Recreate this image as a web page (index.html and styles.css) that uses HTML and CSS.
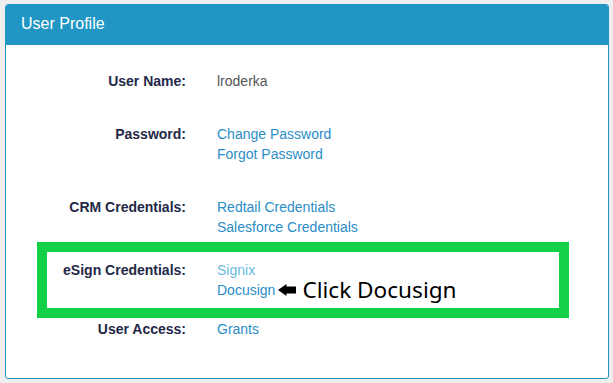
FILE: index.html
```html
<!DOCTYPE html>
<html>
<head>
<meta charset="utf-8">
<link rel="stylesheet" href="styles.css">
</head>
<body>
<div class="panel">
  <div class="panel-header">User Profile</div>
  <div class="panel-body">
    <div class="row row-name">
      <div class="label">User Name:</div>
      <div class="value"><span class="plain">lroderka</span></div>
    </div>
    <div class="row row-pass">
      <div class="label">Password:</div>
      <div class="value">
        <a class="link" href="#">Change Password</a>
        <a class="link" href="#">Forgot Password</a>
      </div>
    </div>
    <div class="row row-crm">
      <div class="label">CRM Credentials:</div>
      <div class="value">
        <a class="link" href="#">Redtail Credentials</a>
        <a class="link" href="#">Salesforce Credentials</a>
      </div>
    </div>
    <div class="highlight">
      <div class="row">
        <div class="label">eSign Credentials:</div>
        <div class="value">
          <a class="link link-visited" href="#">Signix</a>
          <div class="annotated">
            <a class="link" href="#">Docusign</a>
            <svg class="arrow" width="18" height="12" viewBox="0 0 18 12"><path d="M0 6 L8.5 0 V2.5 H18 V9.5 H8.5 V12 Z" fill="#000"/></svg>
            <span class="note">Click Docusign</span>
          </div>
        </div>
      </div>
    </div>
    <div class="row row-access">
      <div class="label">User Access:</div>
      <div class="value"><a class="link" href="#">Grants</a></div>
    </div>
  </div>
</div>
</body>
</html>
```
FILE: styles.css
```css
html, body {
  margin: 0;
  padding: 0;
}
body {
  background: #eeeeee;
  padding: 4px 4px 4px 5px;
  font-family: "Liberation Sans", Arial, sans-serif;
  font-size: 14px;
  line-height: 20px;
}
.panel {
  width: 604px;
  height: 375px;
  box-sizing: border-box;
  border: 1px solid #2196c4;
  border-radius: 3px;
  background: #ffffff;
  overflow: hidden;
}
.panel-header {
  height: 40px;
  background: #2196c4;
  color: #ffffff;
  font-size: 16px;
  line-height: 37px;
  padding-left: 15px;
}
.panel-body {
  padding: 26px 0 0 41px;
}
.row {
  display: grid;
  grid-template-columns: 139px 1fr;
  column-gap: 31px;
}
.row-name { margin-bottom: 33px; }
.row-pass { margin-bottom: 33px; }
.row-crm { margin-bottom: 5px; }
.row-access { margin-top: 1px; }
.label {
  text-align: right;
  font-weight: bold;
  color: #1f2847;
}
.value {
  display: flex;
  flex-direction: column;
  align-items: flex-start;
}
.plain {
  color: #555555;
}
.link {
  color: #2a8dc6;
  text-decoration: none;
}
.link-visited {
  color: #6bbbe0;
}
.highlight {
  width: 532px;
  box-sizing: border-box;
  margin-left: -10px;
  border: 10px solid #12d146;
  padding: 8px 0;
}
.annotated {
  display: flex;
  align-items: center;
  height: 20px;
  white-space: nowrap;
}
.arrow {
  margin-left: 3px;
  flex: none;
}
.note {
  margin-left: 6px;
  font-family: "Noto Sans", "Open Sans", sans-serif;
  font-size: 22.6px;
  line-height: 20px;
  color: #000000;
}
```
